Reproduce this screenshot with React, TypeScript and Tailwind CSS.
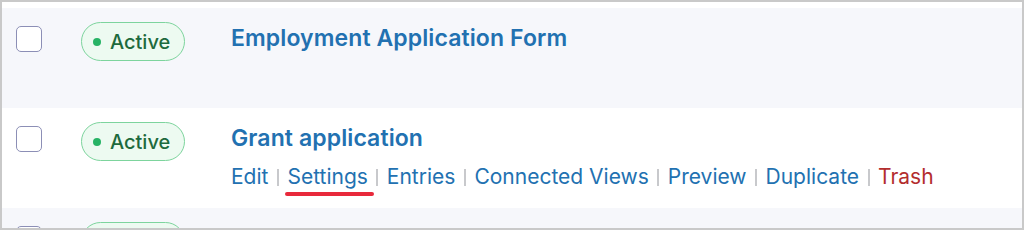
import React from "react";

function Checkbox() {
  return (
    <div className="w-[26px] h-[26px] shrink-0 rounded-[5px] border-[1.5px] border-[#8c8fb6] bg-white" />
  );
}

function Badge() {
  return (
    <div className="flex h-[39px] w-[104px] shrink-0 items-center rounded-full border-[1.5px] border-[#7dd49d] bg-[#edfaf1] pl-[11px]">
      <span className="h-[8px] w-[8px] rounded-full bg-[#27b365]" />
      <span className="ml-[9px] text-[20px] font-medium leading-none text-[#1d6a3d]">Active</span>
    </div>
  );
}

const actions = ["Edit", "Settings", "Entries", "Connected Views", "Preview", "Duplicate"];

function Row({
  bg,
  title,
  showActions,
}: {
  bg: string;
  title: string;
  showActions?: boolean;
}) {
  return (
    <div className={`flex h-[100px] shrink-0 items-start ${bg}`}>
      <div className="ml-[14px] mt-[18px]">
        <Checkbox />
      </div>
      <div className="ml-[39px] mt-[14px]">
        <Badge />
      </div>
      <div className="ml-[46px] mt-[16px] flex flex-col">
        <div className="text-[23px] font-semibold leading-[28px] tracking-[0.1px] text-[#2271b1]">{title}</div>
        {showActions && (
          <div className="mt-[11px] flex items-center gap-[8.5px] text-[21px] leading-[28px] text-[#2271b1]">
            {actions.map((a) => (
              <React.Fragment key={a}>
                {a === "Settings" ? (
                  <span className="relative">
                    {a}
                    <span className="absolute -left-[2px] -right-[6px] -bottom-[5px] h-[4px] rounded-full bg-[#e8293b]" />
                  </span>
                ) : (
                  <span>{a}</span>
                )}
                <span className="mt-[1px] inline-block h-[17px] w-[2px] bg-[#c8c9cc]" />
              </React.Fragment>
            ))}
            <span className="text-[#b32d2e]">Trash</span>
          </div>
        )}
      </div>
    </div>
  );
}

export default function App() {
  return (
    <div className="h-[230px] w-[1024px] overflow-hidden border-2 border-[#c9c9c9] bg-white pt-[6px] font-['Inter','Noto_Sans',sans-serif]">
      <div className="flex flex-col">
        <Row bg="bg-[#f6f7fb]" title="Employment Application Form" />
        <Row bg="bg-white" title="Grant application" showActions />
        <Row bg="bg-[#f6f7fb]" title="Google Sheets Integration" />
      </div>
    </div>
  );
}
